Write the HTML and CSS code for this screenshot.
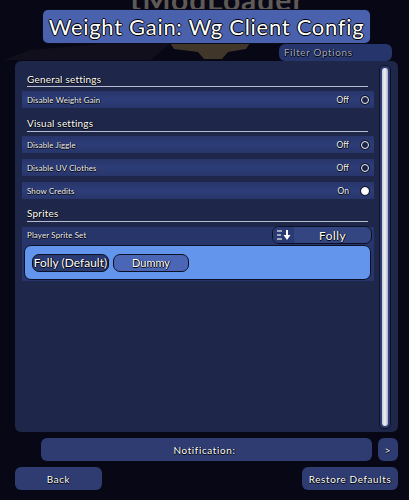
FILE: index.html
```html
<!DOCTYPE html>
<html lang="en">
<head>
    <meta charset="UTF-8">
    <meta name="viewport" content="width=device-width, initial-scale=1.0">
    <title>Weight Gain: Wg Client Config</title>
    <link rel="stylesheet" href="styles.css">
</head>
<body>
    <div class="backdrop">
        <div class="logo-text">tModLoader</div>
        <svg class="logo-gear" width="260" height="18" viewBox="0 0 260 18">
            <path d="M4 17L30 7L100 1H170L150 17Z" fill="#120f1c"/>
            <path d="M170 0H250L246 6L228 9L222 16H204L198 9L174 6Z" fill="#41362a"/>
        </svg>
    </div>
    <div class="page">
        <h1 class="title">Weight Gain: Wg Client Config</h1>
        <div class="filter">Filter Options</div>
        <div class="panel">
            <div class="list">
                <h2 class="section first">General settings</h2>
                <div class="row">
                    <span class="label">Disable Weight Gain</span>
                    <span class="state">Off</span>
                    <span class="toggle"></span>
                </div>
                <h2 class="section">Visual settings</h2>
                <div class="row">
                    <span class="label">Disable Jiggle</span>
                    <span class="state">Off</span>
                    <span class="toggle"></span>
                </div>
                <div class="row">
                    <span class="label">Disable UV Clothes</span>
                    <span class="state">Off</span>
                    <span class="toggle"></span>
                </div>
                <div class="row">
                    <span class="label">Show Credits</span>
                    <span class="state">On</span>
                    <span class="toggle on"></span>
                </div>
                <h2 class="section">Sprites</h2>
                <div class="select-row">
                    <div class="select-head">
                        <span class="label">Player Sprite Set</span>
                        <div class="select">
                            <span class="select-icon">
                                <svg width="14" height="10" viewBox="0 0 14 10">
                                    <path d="M0 1H5M0 5H4M0 9H5" stroke="#c9cbd6" stroke-width="1.6" fill="none"/>
                                    <path d="M9 0H11V5H13.500L10 10L6.500 5H9Z" fill="#fff"/>
                                </svg>
                            </span>
                            <span class="select-value">Folly</span>
                        </div>
                    </div>
                    <div class="options">
                        <button class="option selected">Folly (Default)</button>
                        <button class="option">Dummy</button>
                    </div>
                </div>
            </div>
            <div class="scrollbar"><div class="thumb"></div></div>
        </div>
        <div class="notify">
            <div class="btn notify-text">Notification:</div>
            <div class="btn notify-next">&gt;</div>
        </div>
        <div class="actions">
            <div class="btn back">Back</div>
            <div class="btn restore">Restore Defaults</div>
        </div>
    </div>
</body>
</html>
```

FILE: styles.css
```css
* {
    box-sizing: border-box;
}

body {
    margin: 0;
    height: 500px;
    overflow: hidden;
    position: relative;
    font-family: Lato, "Liberation Sans", sans-serif;
    background-color: #070716;
    color: #fff;
}

.backdrop {
    position: absolute;
    top: 0;
    left: 0;
    width: 100%;
}

.logo-text {
    position: absolute;
    top: -16px;
    left: 130px;
    font-size: 30px;
    font-weight: 700;
    line-height: 30px;
    letter-spacing: 1px;
    color: #5f5a55;
}

.logo-gear {
    position: absolute;
    top: 43px;
    left: 0;
}

.page {
    position: relative;
    padding: 10px 11px 0 15px;
}

.title {
    width: 327px;
    height: 33px;
    margin: 0 0 1px 28px;
    background: #4a62ad;
    border-radius: 5px;
    box-shadow: 0 0 0 1px #0a0c1e;
    font-size: 22px;
    font-weight: 400;
    line-height: 33px;
    text-align: center;
    white-space: nowrap;
    text-shadow: 1px 0 0 #000, -1px 0 0 #000, 0 1px 0 #000, 0 -1px 0 #000;
    letter-spacing: 0.7px;
}

.filter {
    width: 113px;
    height: 17px;
    margin-left: 264px;
    padding-left: 5px;
    background: #26356c;
    border-radius: 6px;
    font-size: 10px;
    line-height: 16px;
    letter-spacing: 0.6px;
    color: #a0a8c0;
    text-shadow: 1px 0 0 #000, 0 1px 0 #000;
}

.panel {
    display: flex;
    height: 371px;
    background: #1e2749;
    border-radius: 6px;
    padding: 4px 7px 3px 7px;
    gap: 5px;
}

.list {
    width: 353px;
}

.section {
    height: 18px;
    margin: 0 6px 4px 5px;
    padding-top: 3px;
    border-bottom: 1px solid #b6bccb;
    font-size: 10px;
    font-weight: 400;
    line-height: 13px;
    letter-spacing: 0.2px;
    text-shadow: 1px 0 0 #000, 0 1px 0 #000;
}

.section.first {
    height: 22px;
    padding-top: 8px;
}

.section:nth-of-type(3) {
    height: 17px;
    padding-top: 2px;
    margin-bottom: 5px;
}

.row {
    display: flex;
    align-items: center;
    height: 17px;
    margin-bottom: 6px;
    padding: 0 5px;
    background: linear-gradient(#27356a, #2d3d78 50%, #27356a);
}

.label {
    flex: 1;
    font-size: 8px;
    letter-spacing: 0.1px;
    color: #f2f3f7;
    text-shadow: 1px 0 0 #000, 0 1px 0 #000;
}

.state {
    font-size: 8.500px;
    color: #f2f3f7;
    text-shadow: 1px 0 0 #000, 0 1px 0 #000;
}

.toggle {
    width: 8px;
    height: 8px;
    margin: 0 0 0 12px;
    border: 1.500px solid #f2f2f5;
    border-radius: 50%;
    background: #1a2344;
    box-shadow: 0 0 0 1px #10162f;
}

.toggle.on {
    background: #fff;
}

.select-row {
    height: 54px;
    padding: 0 1px 0 0;
    background: #27356a;
}

.select-head {
    display: flex;
    align-items: flex-start;
    height: 18px;
    padding-left: 5px;
}

.select-head .label {
    line-height: 16px;
}

.select {
    display: flex;
    align-items: center;
    width: 100px;
    height: 18px;
    margin: -1px 1px 0 0;
    background: #344682;
    border: 1.500px solid #0c1024;
    border-radius: 7px;
    overflow: hidden;
}

.select-icon {
    display: flex;
    align-items: center;
    justify-content: center;
    width: 21px;
    height: 100%;
    background: #2a3a72;
}

.select-value {
    flex: 1;
    text-align: center;
    font-size: 12px;
    letter-spacing: 0.4px;
    text-shadow: 1px 0 0 #000, 0 1px 0 #000;
}

.options {
    display: flex;
    align-items: center;
    gap: 4px;
    height: 35px;
    margin: 0 2px;
    padding-left: 7px;
    background: #6495ed;
    border: 1.500px solid #0c1024;
    border-radius: 7px;
}

.option {
    width: 76px;
    height: 18px;
    padding: 0;
    background: #4a66b4;
    border: 1.500px solid #0c1024;
    border-radius: 7px;
    font-family: inherit;
    font-size: 11px;
    color: #fff;
    white-space: nowrap;
    text-shadow: 1px 0 0 #000, 0 1px 0 #000;
}

.option.selected {
    width: 77px;
    background: #2a3a72;
    font-size: 12px;
}

.scrollbar {
    width: 12px;
    height: 100%;
    padding: 2px 2px;
    background: #2c3b70;
    border: 1px solid #0c1024;
    border-radius: 5px;
}

.thumb {
    height: 100%;
    background: linear-gradient(90deg, #c9ccd9, #f0f1f6 50%, #a9adc0);
    border-radius: 3px;
}

.btn {
    display: flex;
    align-items: center;
    justify-content: center;
    height: 23px;
    background: #2e3c72;
    border-radius: 6px;
    font-size: 10px;
    letter-spacing: 0.6px;
    text-shadow: 1px 0 0 #000, 0 1px 0 #000;
}

.notify {
    display: flex;
    gap: 6px;
    margin: 6px 0 6px 26px;
}

.notify-text {
    width: 331px;
    padding-right: 4px;
}

.notify-next {
    width: 20px;
}

.actions {
    display: flex;
    justify-content: space-between;
}

.back {
    width: 87px;
}

.restore {
    width: 96px;
    white-space: nowrap;
}
```
